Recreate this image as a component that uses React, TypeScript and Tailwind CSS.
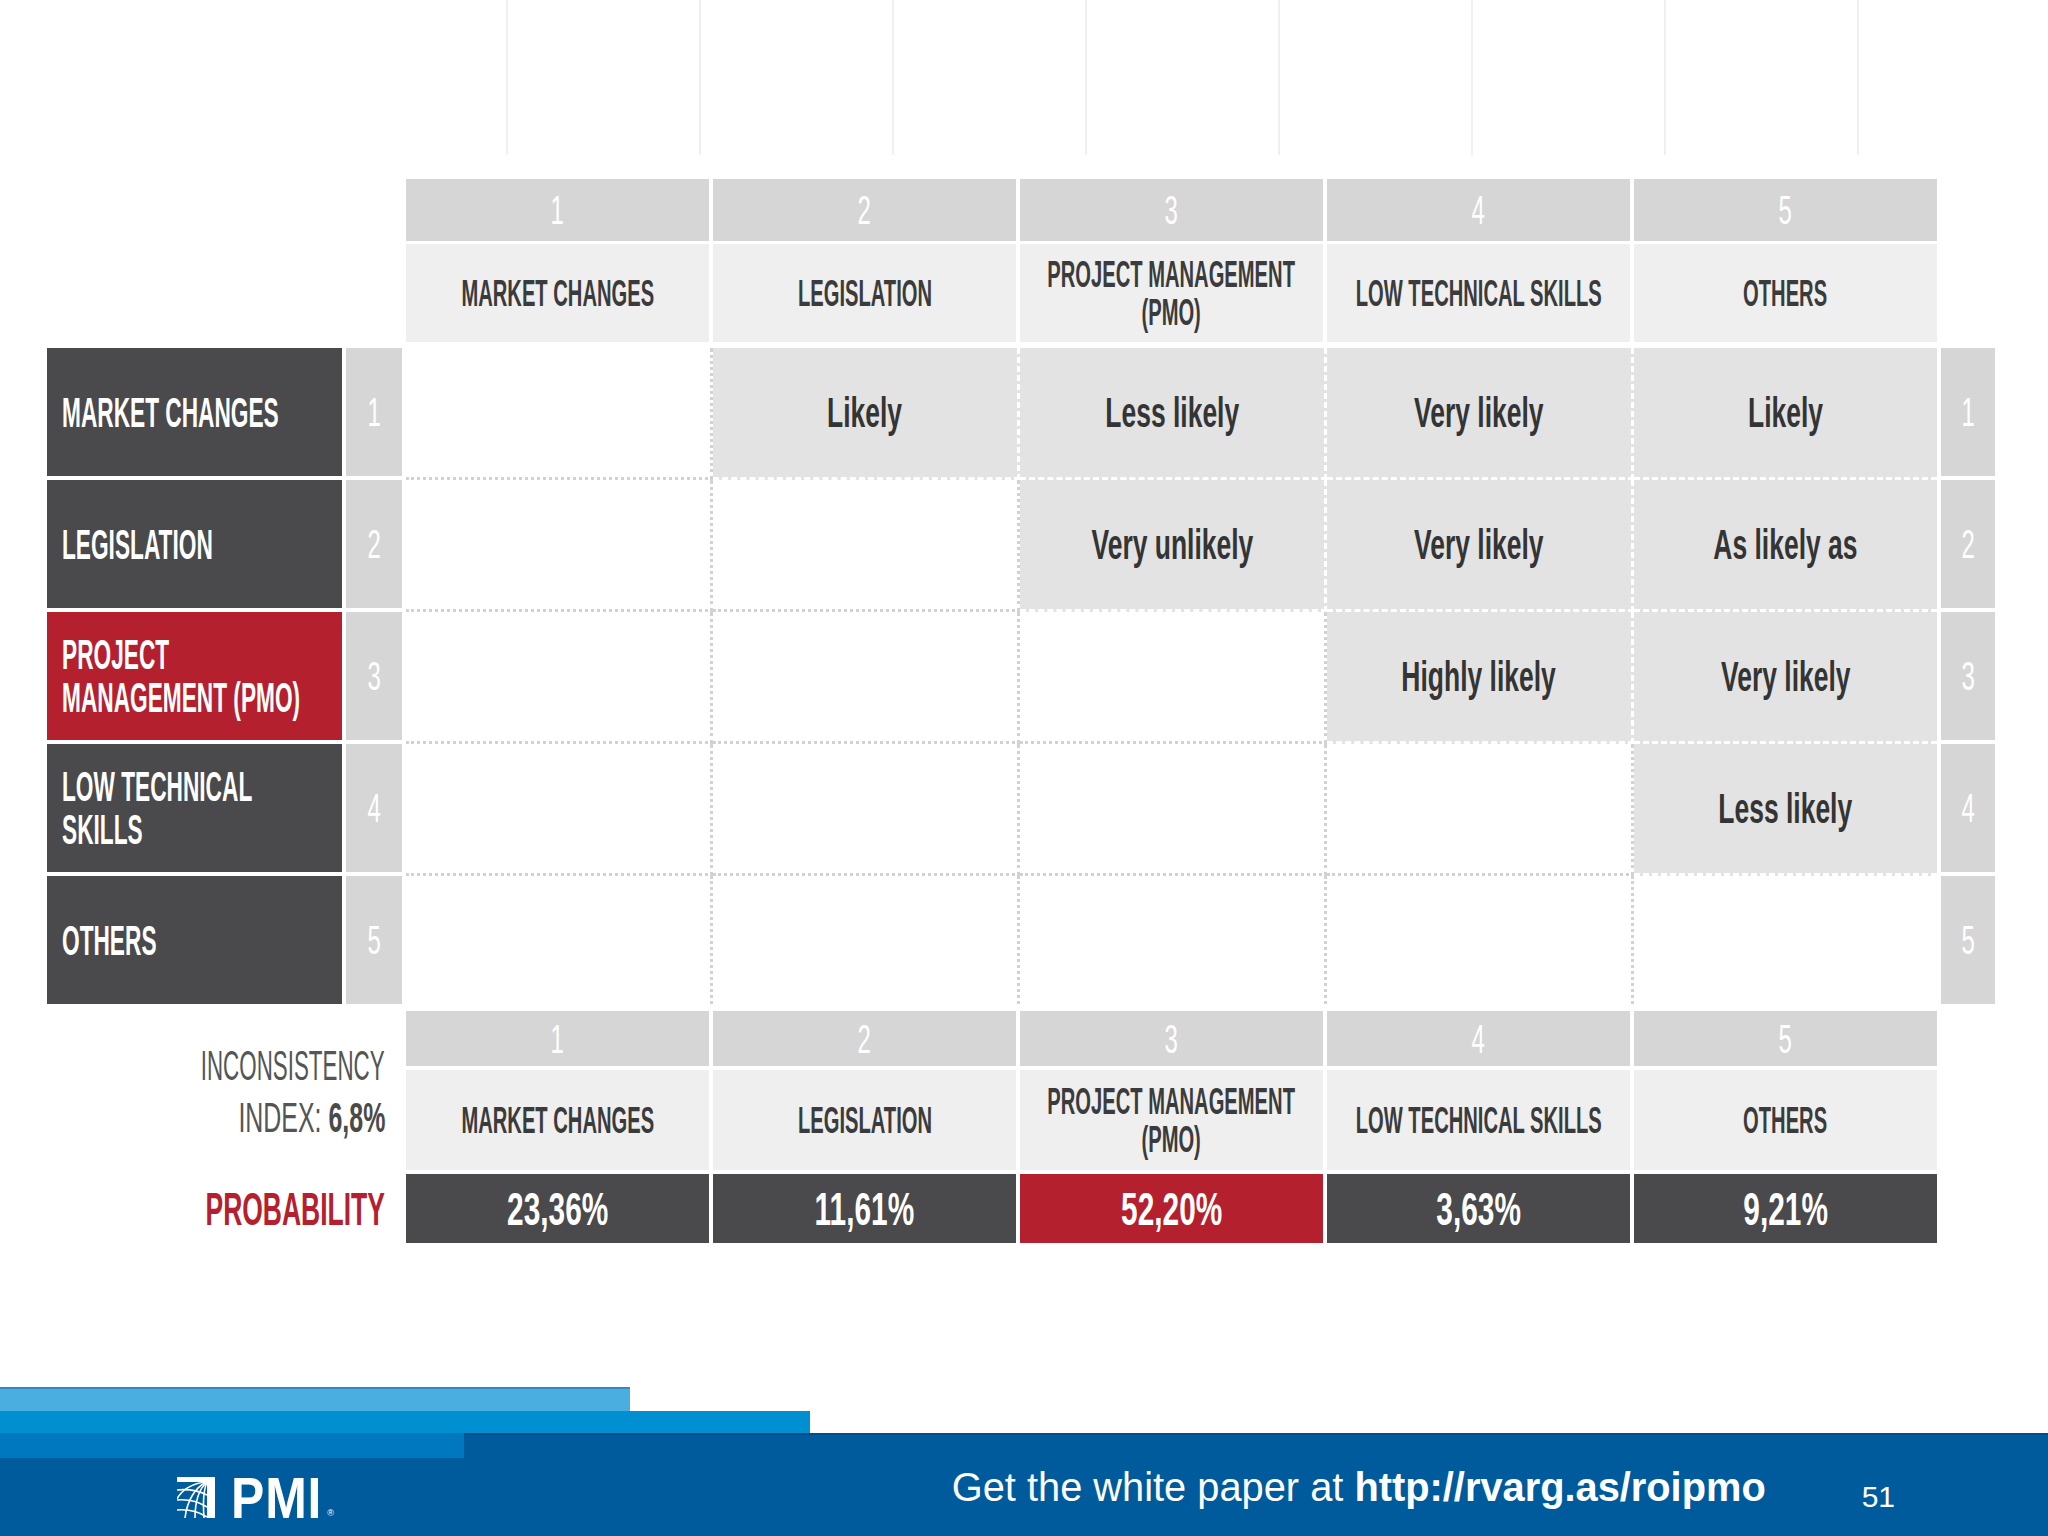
import React from "react";

const cond = "font-['Liberation_Sans',Arial,sans-serif]";
const arial = "font-['Liberation_Sans',Arial,sans-serif]";

const columns = [
  { n: "1", label: ["MARKET CHANGES"] },
  { n: "2", label: ["LEGISLATION"] },
  { n: "3", label: ["PROJECT MANAGEMENT", "(PMO)"] },
  { n: "4", label: ["LOW TECHNICAL SKILLS"] },
  { n: "5", label: ["OTHERS"] },
];

const rows = [
  { n: "1", lines: ["MARKET CHANGES"], red: false },
  { n: "2", lines: ["LEGISLATION"], red: false },
  { n: "3", lines: ["PROJECT", "MANAGEMENT (PMO)"], red: true },
  { n: "4", lines: ["LOW TECHNICAL", "SKILLS"], red: false },
  { n: "5", lines: ["OTHERS"], red: false },
];

// upper triangle of the pairwise matrix
const matrix: (string | null)[][] = [
  [null, "Likely", "Less likely", "Very likely", "Likely"],
  [null, null, "Very unlikely", "Very likely", "As likely as"],
  [null, null, null, "Highly likely", "Very likely"],
  [null, null, null, null, "Less likely"],
  [null, null, null, null, null],
];

const probs = [
  { v: "23,36%", red: false },
  { v: "11,61%", red: false },
  { v: "52,20%", red: true },
  { v: "3,63%", red: false },
  { v: "9,21%", red: false },
];

function Lines({ lines }: { lines: string[] }) {
  return (
    <>
      {lines.map((l, i) => (
        <React.Fragment key={l}>
          {i > 0 && <br />}
          {l}
        </React.Fragment>
      ))}
    </>
  );
}

function NumCell({ n, h }: { n: string; h: string }) {
  return (
    <div className={`${h} bg-[#d6d6d6] flex items-center justify-center`}>
      <span className={`${cond} inline-block scale-x-[0.6] text-[40px] leading-none text-white`}>{n}</span>
    </div>
  );
}

function HeaderLabel({ lines }: { lines: string[] }) {
  return (
    <div className="h-full bg-[#efefef] flex items-center justify-center pt-[2px]">
      <span
        className={`${cond} inline-block scale-x-[0.545] whitespace-nowrap text-center text-[37px] leading-[38px] font-bold text-[#3b3b3c]`}
      >
        <Lines lines={lines} />
      </span>
    </div>
  );
}

function Globe() {
  return (
    <svg width="38" height="41" viewBox="0 0 38 41" fill="none" stroke="white" strokeWidth="1.6">
      <rect x="30" y="0" width="8" height="41" fill="white" stroke="none" />
      <rect x="0" y="0" width="38" height="5" fill="white" stroke="none" />
      <path d="M30 5 C18 10 10 24 8 41" />
      <path d="M30 5 C22 12 18 26 18 41" />
      <path d="M30 5 C26 14 26 28 27 41" />
      <path d="M30 5 C14 6 4 14 0 22" />
      <path d="M0 13 C10 12 22 14 30 18" />
      <path d="M0 23 C12 22 22 25 30 30" />
      <path d="M0 33 C12 32 22 35 30 40" />
    </svg>
  );
}

export default function App() {
  return (
    <div className="w-[2048px] h-[1536px] bg-white flex flex-col overflow-hidden">
      {/* faint ghost lines at the top of the slide */}
      <div className="h-[155px] flex pl-[506px] gap-[191px]">
        {[0, 1, 2, 3, 4, 5, 6, 7].map((i) => (
          <div key={i} className="w-[2px] h-full bg-[#eff0f1]" />
        ))}
      </div>

      {/* column header */}
      <div className="mt-[24px] ml-[406px] grid grid-cols-[303px_303px_303px_303px_303px] grid-rows-[62px_98px] gap-x-[4px] gap-y-[3px]">
        {columns.map((c) => (
          <NumCell key={c.n} n={c.n} h="h-full" />
        ))}
        {columns.map((c) => (
          <HeaderLabel key={c.n} lines={c.label} />
        ))}
      </div>

      {/* body */}
      <div className="mt-[6px] ml-[47px] flex gap-[4px]">
        <div className="w-[295px] flex flex-col gap-[4px]">
          {rows.map((r) => (
            <div
              key={r.n}
              className={`h-[128px] flex items-center pl-[15px] ${r.red ? "bg-[#b5202e]" : "bg-[#4a494b]"}`}
            >
              <span
                className={`${cond} inline-block origin-left scale-x-[0.54] whitespace-nowrap text-[42px] leading-[43px] font-bold text-white`}
              >
                <Lines lines={r.lines} />
              </span>
            </div>
          ))}
        </div>

        <div className="w-[56px] flex flex-col gap-[4px]">
          {rows.map((r) => (
            <NumCell key={r.n} n={r.n} h="h-[128px]" />
          ))}
        </div>

        <div className="w-[1531px] grid grid-cols-[307px_307px_307px_307px_303px] grid-rows-[132px_132px_132px_132px_128px]">
          {matrix.map((row, i) =>
            row.map((cell, j) => {
              const gray = cell !== null;
              return (
                <div
                  key={`${i}-${j}`}
                  className={[
                    "flex items-center justify-center",
                    gray ? "bg-[#e3e3e3] border-white border-dashed" : "bg-white border-[#d2d2d2] border-dotted",
                    j < 4 ? "border-r-[3px]" : "",
                    i < 4 ? "border-b-[3px]" : "",
                  ].join(" ")}
                >
                  {cell && (
                    <span
                      className={`${cond} inline-block scale-x-[0.63] whitespace-nowrap text-[42px] leading-none font-bold text-[#343434]`}
                    >
                      {cell}
                    </span>
                  )}
                </div>
              );
            })
          )}
        </div>

        <div className="w-[54px] flex flex-col gap-[4px]">
          {rows.map((r) => (
            <NumCell key={r.n} n={r.n} h="h-[128px]" />
          ))}
        </div>
      </div>

      {/* bottom summary */}
      <div className="mt-[7px] flex">
        <div className="w-[385px] flex flex-col items-end">
          <div className="h-[159px] pt-[28px] flex flex-col items-end">
            <span
              className={`${cond} inline-block origin-right scale-x-[0.52] whitespace-nowrap text-[43px] leading-[52px] text-[#555555]`}
            >
              INCONSISTENCY
            </span>
            <span
              className={`${cond} inline-block origin-right scale-x-[0.58] whitespace-nowrap text-[43px] leading-[52px] text-[#555555]`}
            >
              INDEX: <span className="font-bold text-[#4a4a4a]">6,8%</span>
            </span>
          </div>
          <div className="mt-[4px] h-[69px] flex items-center">
            <span
              className={`${cond} inline-block origin-right scale-x-[0.575] whitespace-nowrap text-[46px] leading-none font-bold text-[#b5202e]`}
            >
              PROBABILITY
            </span>
          </div>
        </div>

        <div className="ml-[21px] grid grid-cols-[303px_303px_303px_303px_303px] grid-rows-[55px_100px_69px] gap-x-[4px] gap-y-[4px]">
          {columns.map((c) => (
            <NumCell key={c.n} n={c.n} h="h-full" />
          ))}
          {columns.map((c) => (
            <HeaderLabel key={c.n} lines={c.label} />
          ))}
          {probs.map((p) => (
            <div
              key={p.v}
              className={`flex items-center justify-center ${p.red ? "bg-[#b5202e]" : "bg-[#4a494b]"}`}
            >
              <span
                className={`${cond} inline-block scale-x-[0.635] whitespace-nowrap text-[47px] leading-none font-bold text-white`}
              >
                {p.v}
              </span>
            </div>
          ))}
        </div>
      </div>

      {/* footer */}
      <footer className="mt-auto">
        <div className="h-[24px] flex">
          <div className="w-[630px] bg-[#4aaee0] border-t-2 border-[#3189c6]" />
        </div>
        <div className="h-[22px] flex">
          <div className="w-[810px] bg-[#0090d2]" />
        </div>
        <div className="h-[25px] flex">
          <div className="w-[464px] bg-[#0078bf]" />
          <div className="flex-1 bg-[#005b9c] border-t-2 border-[#004d8a]" />
        </div>
        <div className="h-[78px] bg-[#005b9c] flex items-start text-white">
          <div className="ml-[177px] mt-[19px] flex items-end">
            <Globe />
            <span
              className={`${arial} ml-[16px] inline-block origin-left scale-x-[0.86] text-[58px] leading-[41px] h-[41px] font-bold tracking-[1px]`}
            >
              PMI
            </span>
            <span className={`${arial} -ml-[10px] text-[9px] leading-none`}>®</span>
          </div>
          <div className={`${arial} ml-[618px] mt-[10px] text-[39.8px] leading-none whitespace-nowrap`}>
            Get the white paper at <span className="font-bold">http://rvarg.as/roipmo</span>
          </div>
          <div className={`${arial} ml-[96px] mt-[24px] text-[30px] leading-none`}>51</div>
        </div>
      </footer>
    </div>
  );
}
